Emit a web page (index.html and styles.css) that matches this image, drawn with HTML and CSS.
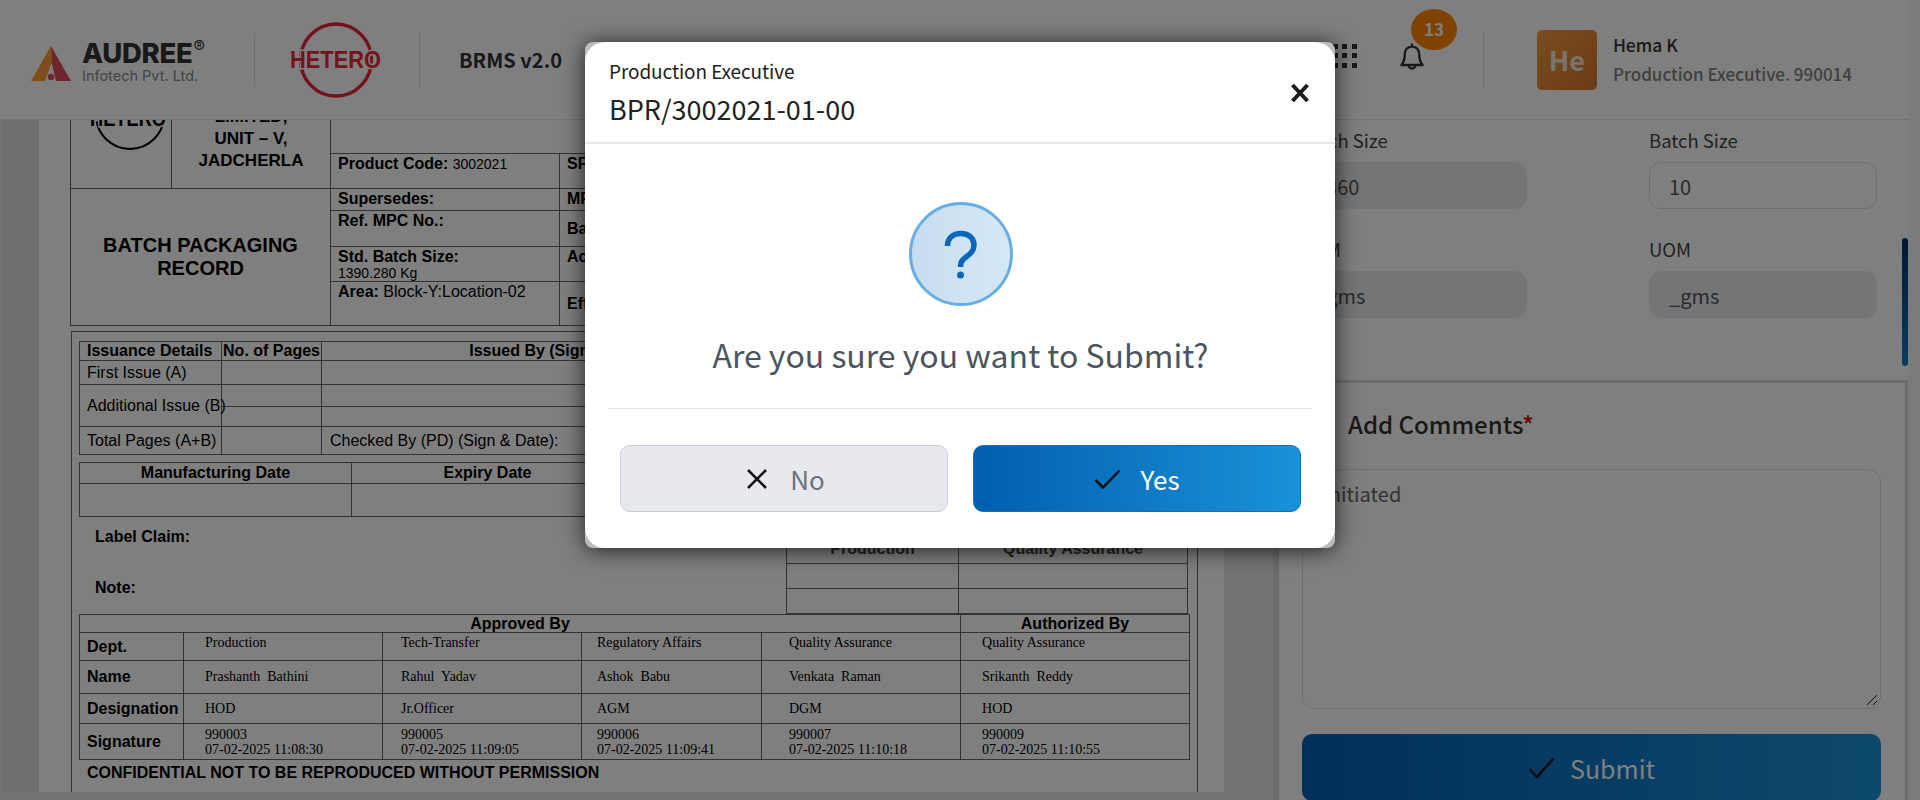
FILE: index.html
```html
<!DOCTYPE html>
<html lang="en">
<head>
  <meta charset="UTF-8" />
  <title>BRMS v2.0</title>
  <meta name="viewport" content="width=device-width, initial-scale=1.0" />
  <link rel="stylesheet" href="styles.css">
</head>
<body>

  <header class="topbar">
    <div class="brand-audree">
      <svg class="audree-mark" width="40" height="35" viewBox="0 0 40 35">
        <polygon points="20,0 0,35 14,35 20.600,16.700" fill="#ff9a30" />
        <polygon points="20,0 40,35 25,35 20.600,16.700" fill="#e04a58" />
        <circle cx="20" cy="31" r="3.200" fill="#e04a58" />
      </svg>
      <div class="audree-text">
        <div class="audree-name">AUDREE<span class="audree-reg">®</span></div>
        <div class="audree-sub">Infotech Pvt. Ltd.</div>
      </div>
    </div>
    <div class="brand-hetero">
      <svg width="95" height="76" viewBox="0 0 95 76">
        <ellipse cx="47" cy="38" rx="35.500" ry="36" fill="none" stroke="#e8293c" stroke-width="3.500" />
        <text class="hetero-word" x="1" y="46" textLength="91" lengthAdjust="spacingAndGlyphs">HETERO</text>
      </svg>
    </div>
    <div class="app-name">BRMS v2.0</div>
    <div class="top-right">
      <div class="apps">
        <span></span><span></span><span></span>
        <span></span><span></span><span></span>
        <span></span><span></span><span></span>
      </div>
      <div class="bell">
        <svg width="24" height="29" viewBox="0 0 24 29">
          <path d="M12 1.500V4.500M12 4.500C7.500 4.500 4.800 8 4.800 12.500C4.800 17 3.800 20 1.500 23H22.500C20.200 20 19.200 17 19.200 12.500C19.200 8 16.500 4.500 12 4.500ZM8.500 23A3.500 3.500 0 0 0 15.500 23" fill="none" stroke="#333" stroke-width="2.400" stroke-linejoin="round" />
        </svg>
        <span class="badge">13</span>
      </div>
      <div class="user">
        <div class="avatar">He</div>
        <div>
          <div class="user-name">Hema K</div>
          <div class="user-role">Production Executive. 990014</div>
        </div>
      </div>
    </div>
  </header>

  <div class="main">
    <div class="viewer">
      <div class="gutter"></div>
      <div class="paper">
        <div class="sheet">

          <table class="doc doc-top">
            <colgroup>
              <col class="w-101" /><col class="w-159" /><col class="w-229" /><col class="w-639" />
            </colgroup>
            <tr class="h-54">
              <td rowspan="2" class="doc-logo">
                <svg width="100" height="89" viewBox="0 0 100 89">
                  <circle cx="59" cy="16" r="34" fill="none" stroke="#000" stroke-width="2" />
                  <text class="doc-logo-word" x="19" y="27" textLength="76" lengthAdjust="spacingAndGlyphs">HETERO</text>
                </svg>
              </td>
              <td rowspan="2" class="company">LIMITED,<br />UNIT – V,<br />JADCHERLA</td>
              <td colspan="2" class="no-line"></td>
            </tr>
            <tr class="h-35">
              <td class="cell-top"><b>Product Code:</b> <small>3002021</small></td>
              <td class="cell-top"><b>SFG Code:</b></td>
            </tr>
            <tr class="h-22">
              <td colspan="2" rowspan="4" class="record-title">BATCH PACKAGING<br />RECORD</td>
              <td class="cell-top"><b>Supersedes:</b></td>
              <td class="cell-top"><b>MFR No.:</b></td>
            </tr>
            <tr class="h-36">
              <td class="cell-top"><b>Ref. MPC No.:</b></td>
              <td><b>Batch No.:</b></td>
            </tr>
            <tr class="h-35">
              <td class="cell-top"><b>Std. Batch Size:</b><br /><small>1390.280 Kg</small></td>
              <td class="cell-top"><b>Actual Batch Size:</b></td>
            </tr>
            <tr class="h-44">
              <td class="cell-top"><b>Area:</b> Block-Y:Location-02</td>
              <td><b>Effective Date:</b></td>
            </tr>
          </table>

          <div class="frame">
            <table class="doc">
              <colgroup>
                <col class="w-142" /><col class="w-100" /><col class="w-476" /><col class="w-392" />
              </colgroup>
              <tr class="h-19">
                <td><b>Issuance Details</b></td>
                <td class="center"><b>No. of Pages</b></td>
                <td class="center"><b>Issued By (Sign &amp; Date)</b></td>
                <td class="center"><b>Received By (Sign &amp; Date)</b></td>
              </tr>
              <tr class="h-24"><td>First Issue (A)</td><td></td><td></td><td></td></tr>
              <tr class="h-22"><td rowspan="2" class="nowrap">Additional Issue (B)</td><td></td><td></td><td></td></tr>
              <tr class="h-20"><td></td><td></td><td></td></tr>
              <tr class="h-28"><td>Total Pages (A+B)</td><td></td><td colspan="2" class="pad-left">Checked By (PD) (Sign &amp; Date):</td></tr>
            </table>

            <table class="doc dates">
              <colgroup><col class="w-272" /><col class="w-272" /><col class="w-566" /></colgroup>
              <tr class="h-21">
                <td class="center"><b>Manufacturing Date</b></td>
                <td class="center"><b>Expiry Date</b></td>
                <td class="center"><b>Retest Date</b></td>
              </tr>
              <tr class="h-33"><td></td><td></td><td></td></tr>
            </table>

            <div class="notes">
              <div class="notes-left">
                <div class="note-claim"><b>Label Claim:</b></div>
                <div class="note-line"><b>Note:</b></div>
              </div>
              <table class="doc sign-small">
                <colgroup><col class="w-172" /><col class="w-229" /></colgroup>
                <tr class="h-30">
                  <td class="center sign-head"><b class="muted">Production</b></td>
                  <td class="center sign-head"><b class="muted">Quality Assurance</b></td>
                </tr>
                <tr class="h-22"><td></td><td></td></tr>
                <tr class="h-22"><td></td><td></td></tr>
              </table>
            </div>

            <table class="doc approved">
              <colgroup>
                <col class="w-104" /><col class="w-199" /><col class="w-199" /><col class="w-180" /><col class="w-199" /><col class="w-229" />
              </colgroup>
              <tr class="h-18">
                <td colspan="5" class="center"><b>Approved By</b></td>
                <td class="center"><b>Authorized By</b></td>
              </tr>
              <tr class="h-28">
                <td><b>Dept.</b></td>
                <td class="serif cell-top indent">Production</td>
                <td class="serif cell-top indent-xs">Tech-Transfer</td>
                <td class="serif cell-top indent-sm">Regulatory Affairs</td>
                <td class="serif cell-top indent-md">Quality Assurance</td>
                <td class="serif cell-top indent-lg">Quality Assurance</td>
              </tr>
              <tr class="h-33">
                <td><b>Name</b></td>
                <td class="serif indent">Prashanth&nbsp; Bathini</td>
                <td class="serif indent-xs">Rahul&nbsp; Yadav</td>
                <td class="serif indent-sm">Ashok&nbsp; Babu</td>
                <td class="serif indent-md">Venkata&nbsp; Raman</td>
                <td class="serif indent-lg">Srikanth&nbsp; Reddy</td>
              </tr>
              <tr class="h-30">
                <td><b>Designation</b></td>
                <td class="serif indent">HOD</td>
                <td class="serif indent-xs">Jr.Officer</td>
                <td class="serif indent-sm">AGM</td>
                <td class="serif indent-md">DGM</td>
                <td class="serif indent-lg">HOD</td>
              </tr>
              <tr class="h-36">
                <td><b>Signature</b></td>
                <td class="serif tight indent">990003<br />07-02-2025 11:08:30</td>
                <td class="serif tight indent-xs">990005<br />07-02-2025 11:09:05</td>
                <td class="serif tight indent-sm">990006<br />07-02-2025 11:09:41</td>
                <td class="serif tight indent-md">990007<br />07-02-2025 11:10:18</td>
                <td class="serif tight indent-lg">990009<br />07-02-2025 11:10:55</td>
              </tr>
            </table>
            <div class="confidential">CONFIDENTIAL NOT TO BE REPRODUCED WITHOUT PERMISSION</div>
          </div>
        </div>
      </div>
    </div>

    <aside class="side">
      <div class="field-grid">
        <div>
          <label class="field-label">Batch Size</label>
          <div class="input disabled shift">1360</div>
        </div>
        <div>
          <label class="field-label">Batch Size</label>
          <div class="input">10</div>
        </div>
        <div>
          <label class="field-label">UOM</label>
          <div class="input disabled shift">_gms</div>
        </div>
        <div>
          <label class="field-label">UOM</label>
          <div class="input disabled">_gms</div>
        </div>
      </div>
      <div class="side-scroll"></div>
      <section class="comments">
        <h3 class="comments-title">Add Comments<span class="req">*</span></h3>
        <div class="textarea">
          Initiated
          <svg class="grip" width="12" height="12" viewBox="0 0 12 12">
            <path d="M1 11L11 1M7 11L11 7" stroke="#222" stroke-width="1" />
          </svg>
        </div>
        <button class="btn btn-submit">
          <svg width="27" height="22" viewBox="0 0 27 22"><path d="M1.500 12L9 20L25.500 1.500" fill="none" stroke="#111" stroke-width="2.500" /></svg>
          Submit
        </button>
      </section>
    </aside>
  </div>

  <div class="backdrop">
    <div class="modal">
      <div class="modal-inner">
        <div class="modal-head">
          <div>
            <div class="modal-sub">Production Executive</div>
            <div class="modal-title">BPR/3002021-01-00</div>
          </div>
          <svg class="modal-close" width="20" height="20" viewBox="0 0 20 20">
            <path d="M2.500 2L17.500 18M17.500 2L2.500 18" fill="none" stroke="#1c1c1c" stroke-width="4" />
          </svg>
        </div>
        <div class="modal-body">
          <div class="ask-icon">
            <svg width="98" height="98" viewBox="3 3 98 98">
              <path d="M38.500 44C38.500 36 44 31.500 52 31.500C60 31.500 65 36.500 65 43C65 49 61 52 57 55C53 58 51.500 60 51.500 65" fill="none" stroke="#0b68b8" stroke-width="5.500" />
              <circle cx="51.500" cy="73" r="3.500" fill="#0b68b8" />
            </svg>
          </div>
          <p class="ask-text">Are you sure you want to Submit?</p>
        </div>
        <div class="modal-foot">
          <button class="btn btn-no">
            <svg width="20" height="20" viewBox="0 0 20 20"><path d="M1 1L19 19M19 1L1 19" fill="none" stroke="#111" stroke-width="2.500" /></svg>
            No
          </button>
          <button class="btn btn-yes">
            <svg width="27" height="20" viewBox="0 0 27 20"><path d="M1.500 11L9 18.500L25.500 1.500" fill="none" stroke="#111" stroke-width="2.500" /></svg>
            Yes
          </button>
        </div>
      </div>
    </div>
  </div>

</body>
</html>
```

FILE: styles.css
```css
* {
  box-sizing: border-box;
}

body {
  margin: 0;
  height: 800px;
  overflow: hidden;
  position: relative;
  font-family: "Noto Sans CJK SC", "Noto Sans", sans-serif;
  background-color: #f6f6f6;
  color: #222;
}

/* top bar */

.topbar {
  display: flex;
  align-items: center;
  width: 1908px;
  height: 120px;
  background: #fff;
  border-bottom: 1px solid #e4e4e4;
  position: relative;
  z-index: 2;
}

.brand-audree {
  display: flex;
  align-items: center;
  gap: 11px;
  width: 255px;
  height: 53px;
  padding-left: 31px;
  border-right: 1px solid #ddd;
}

.audree-mark {
  margin-top: 8px;
}

.audree-name {
  font-family: Inter, sans-serif;
  font-weight: 800;
  font-size: 27.500px;
  line-height: 27px;
  color: #333;
  letter-spacing: -0.300px;
}

.audree-reg {
  font-weight: 400;
  font-size: 17px;
  vertical-align: 10px;
  margin-left: 1px;
}

.audree-sub {
  font-family: Inter, sans-serif;
  font-size: 14.500px;
  line-height: 18px;
  color: #888;
}

.brand-hetero {
  display: flex;
  align-items: center;
  justify-content: center;
  width: 165px;
  height: 53px;
  padding-right: 2px;
  border-right: 1px solid #ddd;
}

.hetero-word {
  font-family: "Liberation Sans", sans-serif;
  font-weight: 700;
  font-size: 23px;
  fill: #e8293c;
  paint-order: stroke;
  stroke: #fff;
  stroke-width: 3px;
}

.app-name {
  margin-left: 39px;
  font-size: 20px;
  font-weight: 700;
  color: #333;
}

.top-right {
  display: flex;
  align-items: center;
  margin-left: auto;
}

.apps {
  display: grid;
  grid-template-columns: repeat(3, 5px);
  grid-auto-rows: 5px;
  gap: 4.500px;
  margin-right: 43px;
  margin-top: -8px;
}

.apps span {
  background: #333;
}

.bell {
  position: relative;
  width: 24px;
  height: 29px;
  margin-top: -6px;
}

.badge {
  position: absolute;
  left: 11px;
  top: -33px;
  width: 46px;
  height: 41px;
  border-radius: 50%;
  background: #ff8400;
  color: #fff;
  font-size: 17px;
  font-weight: 700;
  line-height: 40px;
  text-align: center;
}

.user {
  display: flex;
  align-items: center;
  gap: 16px;
  height: 53px;
  margin-left: 59px;
  padding-left: 53px;
  padding-right: 56px;
  border-left: 1px solid #ddd;
}

.avatar {
  width: 60px;
  height: 60px;
  border-radius: 5px;
  background: linear-gradient(135deg, #f49a3e, #d4782c);
  color: #f4e8dc;
  font-size: 27px;
  font-weight: 700;
  line-height: 60px;
  text-align: center;
}

.user-name {
  font-size: 17.500px;
  font-weight: 500;
  line-height: 28px;
  color: #333;
}

.user-role {
  font-size: 17px;
  font-weight: 500;
  line-height: 29px;
  color: #808080;
  white-space: nowrap;
}

/* left document */

.main {
  display: flex;
  height: 680px;
}

.viewer {
  display: flex;
  width: 1276px;
  height: 680px;
  padding-left: 3px;
  background: #e6e6e6;
  border-right: 3px solid #d8d8d8;
}

.gutter {
  width: 36px;
  height: 672px;
  background: #dcdcdc;
}

.paper {
  width: 1185px;
  height: 672px;
  background: #fff;
  overflow: hidden;
}

.sheet {
  width: 1128px;
  margin-left: 31px;
  margin-top: -22px;
  color: #000;
  font-family: "Liberation Sans", Arial, sans-serif;
  font-size: 16px;
}

.doc {
  width: 100%;
  border-collapse: collapse;
  table-layout: fixed;
  line-height: 1;
}

.doc td {
  border: 1px solid #666;
  padding: 0 0 0 7px;
  vertical-align: middle;
}

.doc .no-line {
  border-top: 0;
  border-right: 0;
}

.doc .center {
  text-align: center;
  padding-left: 0;
}

.doc .cell-top {
  vertical-align: top;
  padding-top: 2px;
}

.doc small {
  font-size: 14px;
}

.doc .doc-logo {
  padding: 0;
  vertical-align: top;
}

.doc-logo svg {
  display: block;
}

.doc-logo-word {
  font-family: "Liberation Sans", sans-serif;
  font-weight: 700;
  font-size: 22px;
  paint-order: stroke;
  stroke: #fff;
  stroke-width: 3px;
}

.doc .company {
  padding: 0 0 16px;
  text-align: center;
  font-size: 17px;
  font-weight: 700;
  line-height: 22px;
  vertical-align: bottom;
}

.doc .record-title {
  padding: 0;
  text-align: center;
  font-size: 20px;
  font-weight: 700;
  line-height: 23px;
}

.doc .nowrap {
  white-space: nowrap;
}

.doc .pad-left {
  padding-left: 8px;
}

.w-100 { width: 100px; }
.w-101 { width: 101px; }
.w-104 { width: 104px; }
.w-142 { width: 142px; }
.w-159 { width: 159px; }
.w-172 { width: 172px; }
.w-180 { width: 180px; }
.w-199 { width: 199px; }
.w-229 { width: 229px; }
.w-272 { width: 272px; }
.w-392 { width: 392px; }
.w-476 { width: 476px; }
.w-566 { width: 566px; }
.w-639 { width: 639px; }

.h-18 { height: 18px; }
.h-19 { height: 19px; }
.h-20 { height: 20px; }
.h-21 { height: 21px; }
.h-22 { height: 22px; }
.h-24 { height: 24px; }
.h-28 { height: 28px; }
.h-30 { height: 30px; }
.h-33 { height: 33px; }
.h-35 { height: 35px; }
.h-36 { height: 36px; }
.h-44 { height: 44px; }
.h-54 { height: 54px; }

.frame {
  height: 470px;
  margin-top: 5px;
  margin-left: 1px;
  width: 1127px;
  padding: 9px 9px 0 7px;
  border-top: 1px solid #666;
  border-left: 1px solid #666;
  border-right: 1px solid #666;
}

.dates {
  margin-top: 7px;
}

.notes {
  display: flex;
  justify-content: space-between;
  height: 97px;
}

.notes-left {
  padding-left: 16px;
  font-size: 16px;
}

.note-claim {
  margin-top: 11px;
}

.note-line {
  margin-top: 33px;
}

.sign-small {
  width: 401px;
  margin-top: 12px;
}

.doc .sign-head {
  padding-top: 4px;
}

.muted {
  color: #444;
}

.approved .serif {
  font-family: "Liberation Serif", "Times New Roman", serif;
  font-size: 14px;
}

.approved .cell-top {
  padding-top: 3px;
}

.approved .tight {
  line-height: 15px;
}

.approved .indent {
  padding-left: 21px;
}

.approved .indent-xs {
  padding-left: 18px;
}

.approved .indent-sm {
  padding-left: 15px;
}

.approved .indent-md {
  padding-left: 27px;
}

.approved .indent-lg {
  padding-left: 21px;
}

.confidential {
  margin-top: 4px;
  padding-left: 8px;
  font-weight: 700;
  font-size: 16px;
  line-height: 18px;
}

/* right panel */

.side {
  position: relative;
  width: 632px;
  height: 680px;
  background: #fff;
}

.field-grid {
  display: grid;
  grid-template-columns: 228px 228px;
  column-gap: 122px;
  row-gap: 25px;
  padding: 5px 0 0 23px;
}

.field-label {
  display: block;
  height: 37px;
  font-size: 18.500px;
  line-height: 30px;
  color: #444;
}

.input {
  height: 47px;
  padding-left: 19px;
  border: 1px solid #dcdfe4;
  border-radius: 12px;
  font-size: 20px;
  line-height: 47px;
  color: #555;
}

.input.disabled {
  background: #e8eaee;
  border-color: #e8eaee;
}

.input.shift {
  padding-left: 15px;
}

.side-scroll {
  position: absolute;
  right: 0;
  top: 118px;
  width: 6px;
  height: 128px;
  border-radius: 3px;
  background: linear-gradient(180deg, #00306a, #0e7ec2);
}

.comments {
  width: 632px;
  height: 440px;
  margin-top: 62px;
  padding: 0 24px 0 23px;
  border: 3px solid #d8d8d8;
  border-bottom: 0;
}

.comments-title {
  margin: 0;
  height: 86px;
  padding: 24px 0 0 46px;
  font-size: 24px;
  font-weight: 500;
  line-height: 34px;
  color: #333;
}

.req {
  color: #d00000;
}

.textarea {
  position: relative;
  height: 240px;
  padding: 9px 0 0 20px;
  border: 1px solid #dcdfe4;
  border-radius: 12px;
  font-size: 20px;
  line-height: 30px;
  color: #666;
}

.grip {
  position: absolute;
  right: 2px;
  bottom: 2px;
}

.btn {
  display: flex;
  align-items: center;
  justify-content: center;
  gap: 15px;
  font-family: inherit;
  font-size: 26px;
  border-radius: 10px;
  height: 67px;
  padding: 0;
}

.btn-submit {
  width: 579px;
  margin-top: 25px;
  border: 0;
  color: #fff;
  font-size: 25px;
  background: linear-gradient(90deg, #005fb8, #1a92d8);
}

/* confirm dialog */

.backdrop {
  position: absolute;
  inset: 0;
  z-index: 5;
  display: flex;
  justify-content: center;
  padding-top: 42px;
  background: rgba(0, 0, 0, 0.5);
}

.modal {
  width: 750px;
  height: 506px;
  background: #bdbdbd;
  border-radius: 8px;
  box-shadow: 0 2px 22px rgba(0, 0, 0, 0.75);
}

.modal-inner {
  height: 100%;
  background: #fff;
  border-radius: 20px;
}

.modal-head {
  display: flex;
  align-items: center;
  justify-content: space-between;
  height: 102px;
  padding: 0 25px 0 24px;
  border-bottom: 2px solid #e8e8e8;
}

.modal-sub {
  font-size: 19px;
  line-height: 34px;
  letter-spacing: -0.100px;
  color: #222;
}

.modal-title {
  font-size: 27px;
  line-height: 42px;
  color: #222;
}

.modal-close {
  margin-top: 1px;
}

.modal-body {
  height: 265px;
  margin: 0 22px 0 23px;
  padding-top: 58px;
  border-bottom: 1px solid #dfe1e5;
  text-align: center;
}

.ask-icon {
  display: flex;
  align-items: center;
  justify-content: center;
  width: 104px;
  height: 104px;
  margin: 0 auto;
  border: 3px solid #68aee2;
  border-radius: 50%;
  background: linear-gradient(90deg, #c8dcf0, #d4e9f6);
}

.ask-text {
  margin: 26px 0 0;
  font-size: 32px;
  line-height: 44px;
  color: #4a5560;
}

.modal-foot {
  display: flex;
  gap: 25px;
  padding: 36px 0 0 35px;
}

.btn-no,
.btn-yes {
  gap: 19px;
}

.btn-no {
  width: 328px;
  gap: 23px;
  padding-left: 4px;
  background: #e7e9ee;
  border: 1px solid #c9ccd2;
  color: #6b7280;
}

.btn-yes {
  width: 328px;
  background: linear-gradient(90deg, #035eae, #1a92d8);
  border: 1px solid #0a72c2;
  color: #fff;
}
```
